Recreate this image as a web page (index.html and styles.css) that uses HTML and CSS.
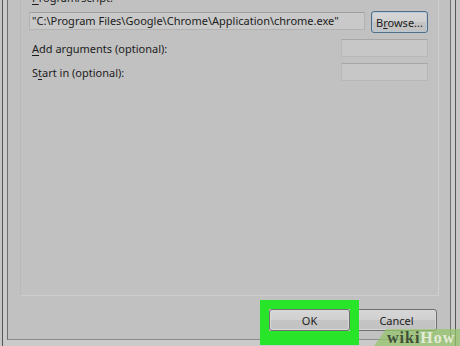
FILE: index.html
```html
<!DOCTYPE html>
<html lang="en">
<head>
    <meta charset="UTF-8">
    <meta name="viewport" content="width=device-width, initial-scale=1.0">
    <title>Create Shortcut - Action</title>
    <link rel="stylesheet" href="styles.css">
</head>
<body>
    <div class="screen">
        <div class="frame">
            <div class="client">
                <section class="page">
                    <div class="label first"><u>P</u>rogram/script:</div>
                    <div class="row">
                        <div class="field path">"C:\Program Files\Google\Chrome\Application\chrome.exe"</div>
                        <button class="btn browse">B<u>r</u>owse...</button>
                    </div>
                    <div class="row">
                        <span class="label"><u>A</u>dd arguments (optional):</span>
                        <div class="field empty"></div>
                    </div>
                    <div class="row">
                        <span class="label">S<u>t</u>art in (optional):</span>
                        <div class="field empty"></div>
                    </div>
                </section>

                <div class="actions">
                    <div class="ok-wrap">
                        <button class="btn ok">OK</button>
                    </div>
                    <button class="btn cancel">Cancel</button>
                </div>
            </div>
        </div>

        <!-- watermark sits over the corner -->
        <div class="watermark"><span class="wiki">wiki</span><span class="how">How</span></div>
    </div>
</body>
</html>
```

FILE: styles.css
```css
body {
    margin: 0;
    padding: 0;
    font-family: "Noto Sans", "Open Sans", sans-serif;
    background-color: #c5c5c5;
}

.screen {
    position: relative;
    width: 460px;
    height: 346px;
    overflow: hidden;
    padding: 0 4px 0 2px;
    box-sizing: border-box;
    background-color: #c6c6c6;
}

.frame {
    height: 100%;
    border-left: 1px solid #555;
    border-right: 1px solid #555;
    padding: 0 4px;
    background-color: #cacaca;
}

.client {
    height: 339px;
    display: flex;
    flex-direction: column;
    border-left: 1px solid #6e6e6e;
    border-right: 1px solid #6e6e6e;
    border-bottom: 1px solid #8c8c8c;
    background-color: #c1c1c1;
}

.page {
    height: 295px;
    margin: 0 11px 0 12px;
    padding: 0 10px 0 8px;
    border-left: 1px solid #b9b9b9;
    border-right: 1px solid #cfcfcf;
    border-bottom: 1px solid #cdcdcd;
    display: flex;
    flex-direction: column;
    color: #1c1c1c;
    font-size: 11px;
}

.label {
    padding-left: 3px;
    line-height: 15px;
    white-space: nowrap;
}

.label u {
    text-underline-offset: 2px;
}

.label.first {
    margin-top: -10px;
}

.row {
    display: flex;
    align-items: center;
    justify-content: space-between;
    gap: 6px;
}

.row + .row {
    margin-top: 6px;
}

.label.first + .row {
    margin-top: 4px;
}

.field {
    box-sizing: border-box;
    height: 18px;
    border: 1px solid #b2b2b2;
    border-top-color: #9f9f9f;
    background-color: #c9c9c9;
}

.field.path {
    flex: 1;
    padding: 0 2px;
    line-height: 16px;
    white-space: nowrap;
    overflow: hidden;
}

.field.empty {
    width: 87px;
    background-color: #c7c7c7;
    border-color: #b8b8b8;
    border-top-color: #a6a6a6;
}

.btn {
    box-sizing: border-box;
    height: 22px;
    font-family: inherit;
    font-size: 11px;
    color: #1c1c1c;
    border: 1px solid #6f6f6f;
    border-radius: 3px;
    background: linear-gradient(#d6d6d6, #d0d0d0 50%, #c4c4c4 50%, #c2c2c2);
    box-shadow: inset 0 0 0 1px #d8d8d8;
    padding: 0;
}

.btn.browse {
    width: 57px;
    margin-top: 2px;
    border-color: #4f6e8a;
    box-shadow: inset 0 0 0 1px #b8c8d4;
}

.actions {
    display: flex;
    justify-content: flex-end;
    gap: 6px;
    padding: 13px 13px 0 0;
}

.ok-wrap {
    position: relative;
}

.ok-wrap::after {
    content: "";
    position: absolute;
    top: -9px;
    left: -9px;
    right: -9px;
    bottom: -14px;
    border-style: solid;
    border-color: #29e52a;
    border-width: 9px 9px 14px 9px;
    z-index: 2;
}

.btn.ok,
.btn.cancel {
    width: 81px;
    display: block;
}

.watermark {
    position: absolute;
    right: 0;
    bottom: 0;
    width: 86px;
    height: 17px;
    padding-left: 13px;
    box-sizing: border-box;
    background-color: rgba(150, 196, 110, 0.75);
    clip-path: polygon(12px 0, 100% 0, 100% 100%, 0 100%);
    font-family: "Liberation Serif", serif;
    font-weight: bold;
    font-size: 16px;
    line-height: 18px;
    letter-spacing: 1px;
    z-index: 3;
}

.wiki {
    color: #3f4f38;
}

.how {
    color: #e3ecd6;
}
```
